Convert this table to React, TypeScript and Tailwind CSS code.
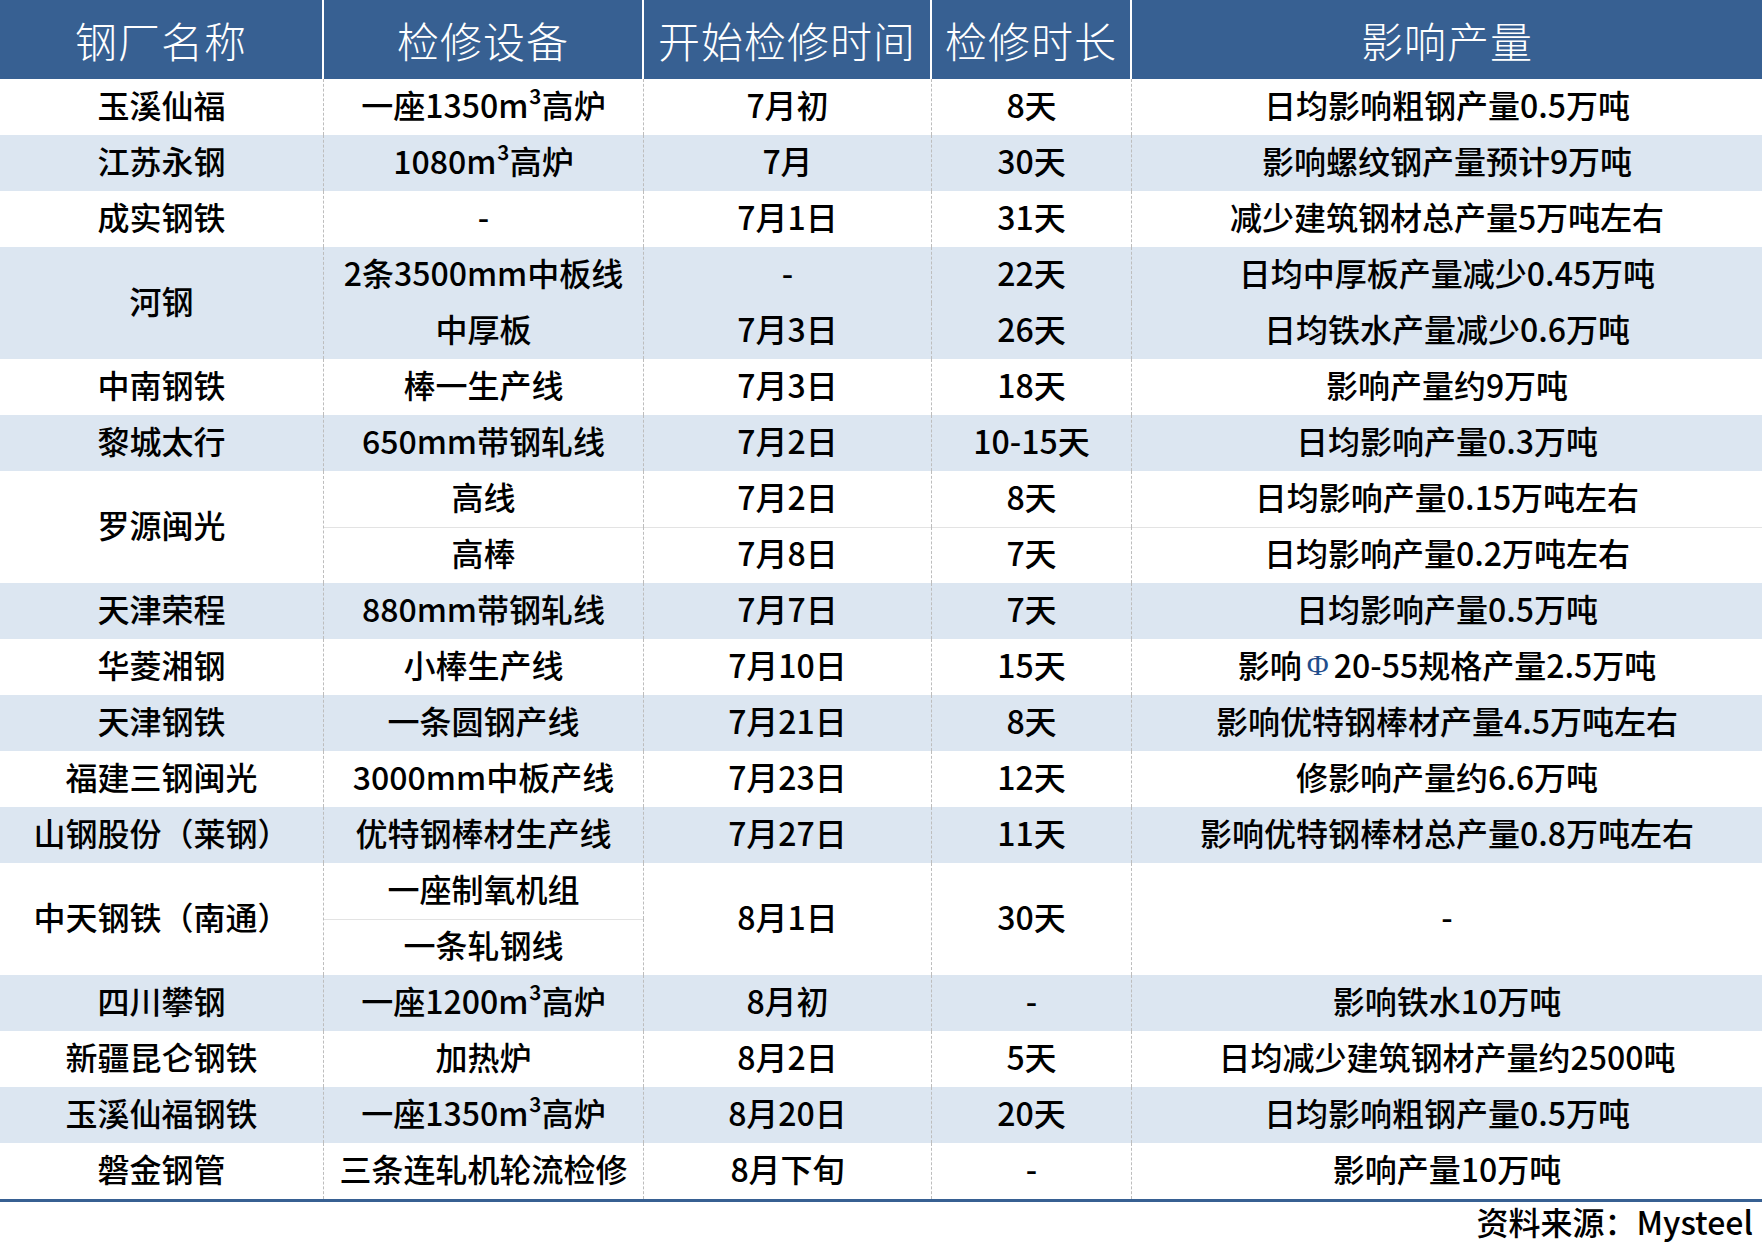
type Row = {
  name?: string;
  nameSpan?: number;
  equip: string;
  start?: string;
  startSpan?: number;
  days?: string;
  daysSpan?: number;
  impact?: React.ReactNode;
  impactSpan?: number;
  divider?: "all" | "equip";
};

type Group = { shade: boolean; rows: Row[] };

const groups: Group[] = [
  { shade: false, rows: [{ name: "玉溪仙福", equip: "一座1350m³高炉", start: "7月初", days: "8天", impact: "日均影响粗钢产量0.5万吨" }] },
  { shade: true, rows: [{ name: "江苏永钢", equip: "1080m³高炉", start: "7月", days: "30天", impact: "影响螺纹钢产量预计9万吨" }] },
  { shade: false, rows: [{ name: "成实钢铁", equip: "-", start: "7月1日", days: "31天", impact: "减少建筑钢材总产量5万吨左右" }] },
  {
    shade: true,
    rows: [
      { name: "河钢", nameSpan: 2, equip: "2条3500mm中板线", start: "-", days: "22天", impact: "日均中厚板产量减少0.45万吨" },
      { equip: "中厚板", start: "7月3日", days: "26天", impact: "日均铁水产量减少0.6万吨" },
    ],
  },
  { shade: false, rows: [{ name: "中南钢铁", equip: "棒一生产线", start: "7月3日", days: "18天", impact: "影响产量约9万吨" }] },
  { shade: true, rows: [{ name: "黎城太行", equip: "650mm带钢轧线", start: "7月2日", days: "10-15天", impact: "日均影响产量0.3万吨" }] },
  {
    shade: false,
    rows: [
      { name: "罗源闽光", nameSpan: 2, equip: "高线", start: "7月2日", days: "8天", impact: "日均影响产量0.15万吨左右" },
      { equip: "高棒", start: "7月8日", days: "7天", impact: "日均影响产量0.2万吨左右", divider: "all" },
    ],
  },
  { shade: true, rows: [{ name: "天津荣程", equip: "880mm带钢轧线", start: "7月7日", days: "7天", impact: "日均影响产量0.5万吨" }] },
  {
    shade: false,
    rows: [
      {
        name: "华菱湘钢",
        equip: "小棒生产线",
        start: "7月10日",
        days: "15天",
        impact: (
          <>
            影响
            <span className="font-['Liberation_Serif',serif] font-normal text-[#1f4e8c] px-[5px] text-[30px]">Φ</span>
            20-55规格产量2.5万吨
          </>
        ),
      },
    ],
  },
  { shade: true, rows: [{ name: "天津钢铁", equip: "一条圆钢产线", start: "7月21日", days: "8天", impact: "影响优特钢棒材产量4.5万吨左右" }] },
  { shade: false, rows: [{ name: "福建三钢闽光", equip: "3000mm中板产线", start: "7月23日", days: "12天", impact: "修影响产量约6.6万吨" }] },
  { shade: true, rows: [{ name: "山钢股份（莱钢）", equip: "优特钢棒材生产线", start: "7月27日", days: "11天", impact: "影响优特钢棒材总产量0.8万吨左右" }] },
  {
    shade: false,
    rows: [
      { name: "中天钢铁（南通）", nameSpan: 2, equip: "一座制氧机组", start: "8月1日", startSpan: 2, days: "30天", daysSpan: 2, impact: "-", impactSpan: 2 },
      { equip: "一条轧钢线", divider: "equip" },
    ],
  },
  { shade: true, rows: [{ name: "四川攀钢", equip: "一座1200m³高炉", start: "8月初", days: "-", impact: "影响铁水10万吨" }] },
  { shade: false, rows: [{ name: "新疆昆仑钢铁", equip: "加热炉", start: "8月2日", days: "5天", impact: "日均减少建筑钢材产量约2500吨" }] },
  { shade: true, rows: [{ name: "玉溪仙福钢铁", equip: "一座1350m³高炉", start: "8月20日", days: "20天", impact: "日均影响粗钢产量0.5万吨" }] },
  { shade: false, rows: [{ name: "磐金钢管", equip: "三条连轧机轮流检修", start: "8月下旬", days: "-", impact: "影响产量10万吨" }] },
];

const headers = ["钢厂名称", "检修设备", "开始检修时间", "检修时长", "影响产量"];

function Cell({
  children,
  shade,
  span,
  last,
  topLine,
}: {
  children: React.ReactNode;
  shade: boolean;
  span?: number;
  last?: boolean;
  topLine?: boolean;
}) {
  return (
    <div
      className={
        "flex items-center justify-center whitespace-nowrap pb-[6px] " +
        (shade ? "bg-[#dce6f1] " : "bg-white ") +
        (span === 2 ? "row-span-2 " : "") +
        (last ? "" : "border-r border-dashed border-[#bdbdbd] ") +
        (topLine ? "shadow-[inset_0_1px_0_#e3e3e3]" : "")
      }
    >
      {children}
    </div>
  );
}

export default function App() {
  return (
    <div className="w-[1762px] h-[1250px] bg-white font-['Noto_Sans_CJK_SC','Noto_Sans',sans-serif] text-black">
      {/* Header */}
      <div className="grid grid-cols-[324px_320px_288px_200px_630px] h-[79px] bg-[#376092]">
        {headers.map((h, i) => (
          <div
            key={h}
            className={
              "flex items-center justify-center pb-[1px] text-[42px] font-light text-white tracking-[1px] " +
              (i < headers.length - 1 ? "border-r-2 border-white" : "")
            }
          >
            {h}
          </div>
        ))}
      </div>

      {/* Body */}
      <div className="grid grid-cols-[324px_320px_288px_200px_630px] auto-rows-[56px] text-[32px] font-medium border-b-[3px] border-[#376092]">
        {groups.map((g) =>
          g.rows.map((r, ri) => {
            const line = r.divider !== undefined;
            return [
              r.name !== undefined && (
                <Cell key={`${r.equip}-n`} shade={g.shade} span={r.nameSpan}>
                  {r.name}
                </Cell>
              ),
              <Cell key={`${r.equip}-e`} shade={g.shade} topLine={line}>
                {r.equip}
              </Cell>,
              r.start !== undefined && (
                <Cell key={`${r.equip}-s`} shade={g.shade} span={r.startSpan} topLine={r.divider === "all"}>
                  {r.start}
                </Cell>
              ),
              r.days !== undefined && (
                <Cell key={`${r.equip}-d`} shade={g.shade} span={r.daysSpan} topLine={r.divider === "all"}>
                  {r.days}
                </Cell>
              ),
              r.impact !== undefined && (
                <Cell key={`${r.equip}-i-${ri}`} shade={g.shade} span={r.impactSpan} last topLine={r.divider === "all"}>
                  {r.impact}
                </Cell>
              ),
            ];
          })
        )}
      </div>

      {/* Source */}
      <div className="flex justify-end pr-[9px] text-[32px] font-medium leading-[38px]">
        资料来源：Mysteel
      </div>
    </div>
  );
}
